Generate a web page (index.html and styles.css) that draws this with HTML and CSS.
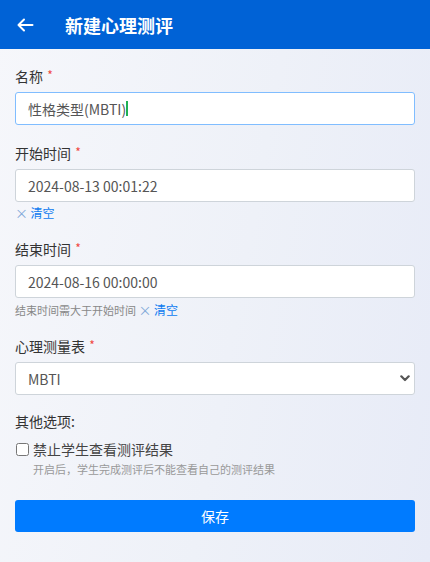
FILE: index.html
```html
<!DOCTYPE html>
<html lang="zh-CN">
<head>
<meta charset="utf-8">
<title>新建心理测评</title>
<link rel="stylesheet" href="styles.css">
</head>
<body>
<div class="page">
  <header class="topbar">
    <span class="back">
      <svg width="18" height="14" viewBox="0 0 18 14"><path d="M8 1.5 L2.5 7 L8 12.5 M2.5 7 H16.5" fill="none" stroke="#fff" stroke-width="2" stroke-linecap="round" stroke-linejoin="round"/></svg>
    </span>
    <h1 class="title">新建心理测评</h1>
  </header>
  <main class="form">
    <div class="group">
      <label class="label">名称 <span class="req">*</span></label>
      <div class="input focused">性格类型(MBTI)<span class="caret"></span></div>
    </div>
    <div class="group">
      <label class="label">开始时间 <span class="req">*</span></label>
      <div class="input">2024-08-13 00:01:22</div>
      <div class="help"><span class="x">×</span> <span class="clear">清空</span></div>
    </div>
    <div class="group">
      <label class="label">结束时间 <span class="req">*</span></label>
      <div class="input">2024-08-16 00:00:00</div>
      <div class="help muted">结束时间需大于开始时间 <span class="x">×</span> <span class="clear">清空</span></div>
    </div>
    <div class="group last">
      <label class="label">心理测量表 <span class="req">*</span></label>
      <div class="select-wrap">
        <div class="input select">MBTI</div>
        <svg class="chev" width="10" height="7" viewBox="0 0 10 7"><path d="M1.3 1.3 L5 5 L8.7 1.3" fill="none" stroke="#555" stroke-width="2.2" stroke-linecap="round" stroke-linejoin="round"/></svg>
      </div>
    </div>
    <div class="group options">
      <div class="label">其他选项:</div>
      <label class="check-row"><span class="box"></span>禁止学生查看测评结果</label>
      <div class="check-help">开启后，学生完成测评后不能查看自己的测评结果</div>
    </div>
    <button class="save">保存</button>
  </main>
</div>
</body>
</html>
```
FILE: styles.css
```css
* { box-sizing: border-box; margin: 0; padding: 0; }
html, body { width: 430px; height: 562px; overflow: hidden; }
body {
  font-family: "Noto Sans CJK SC", "Noto Sans", sans-serif;
  color: #333;
  background: linear-gradient(100deg, #f6f7fb 0%, #eef1f8 55%, #e7ebf7 100%);
}
.page { min-height: 562px; }
.topbar {
  height: 49px;
  background: #0062d6;
  display: flex;
  align-items: center;
  padding-left: 16px;
}
.back { display: flex; width: 18px; height: 14px; margin-top: 1px; }
.title {
  margin-left: 31px;
  color: #fff;
  font-size: 18px;
  font-weight: 700;
  line-height: 1;
}
.form { padding: 17px 15px 0; display: flex; flex-direction: column; }
.group { display: flex; flex-direction: column; margin-bottom: 18px; }
.group.last { margin-bottom: 16px; }
.label { font-size: 14px; line-height: 21px; height: 21px; color: #333; margin-bottom: 5px; display: block; }
.req { color: #f0483e; font-size: 12px; position: relative; top: -2px; margin-left: 1px; }
.input {
  height: 33px;
  background: #fff;
  border: 1px solid #ced4da;
  border-radius: 3px;
  padding: 0 12px;
  font-size: 14px;
  color: #555;
  display: flex;
  align-items: center;
}
.input.focused { border-color: #80bdff; }
.caret { display: inline-block; width: 1.5px; height: 15px; background: #1fb153; margin-left: 0; }
.help { font-size: 11px; line-height: 16px; height: 16px; margin-top: 3px; color: #888; }
.help.muted { margin-top: 4px; }
.help .x { color: #7fa7d8; font-size: 13px; }
.help .clear { color: #0d7bf0; font-size: 12px; }
.select-wrap { position: relative; }
.chev { position: absolute; right: 5px; top: 13px; }
.options { margin-bottom: 0; }
.options .label { margin-bottom: 7px; }
.check-row { display: flex; align-items: center; font-size: 14px; line-height: 21px; height: 21px; color: #444; }
.box {
  width: 13px; height: 13px;
  border: 1px solid #767676;
  border-radius: 2.5px;
  background: #fff;
  margin-left: 1px;
  margin-right: 4px;
}
.check-help { font-size: 11px; line-height: 16px; height: 16px; color: #999; padding-left: 18px; margin-top: 1px; }
.save {
  margin-top: 23px;
  height: 32px;
  border: none;
  border-radius: 3px;
  background: #007bff;
  color: #fff;
  font-family: inherit;
  font-size: 14px;
}
```
